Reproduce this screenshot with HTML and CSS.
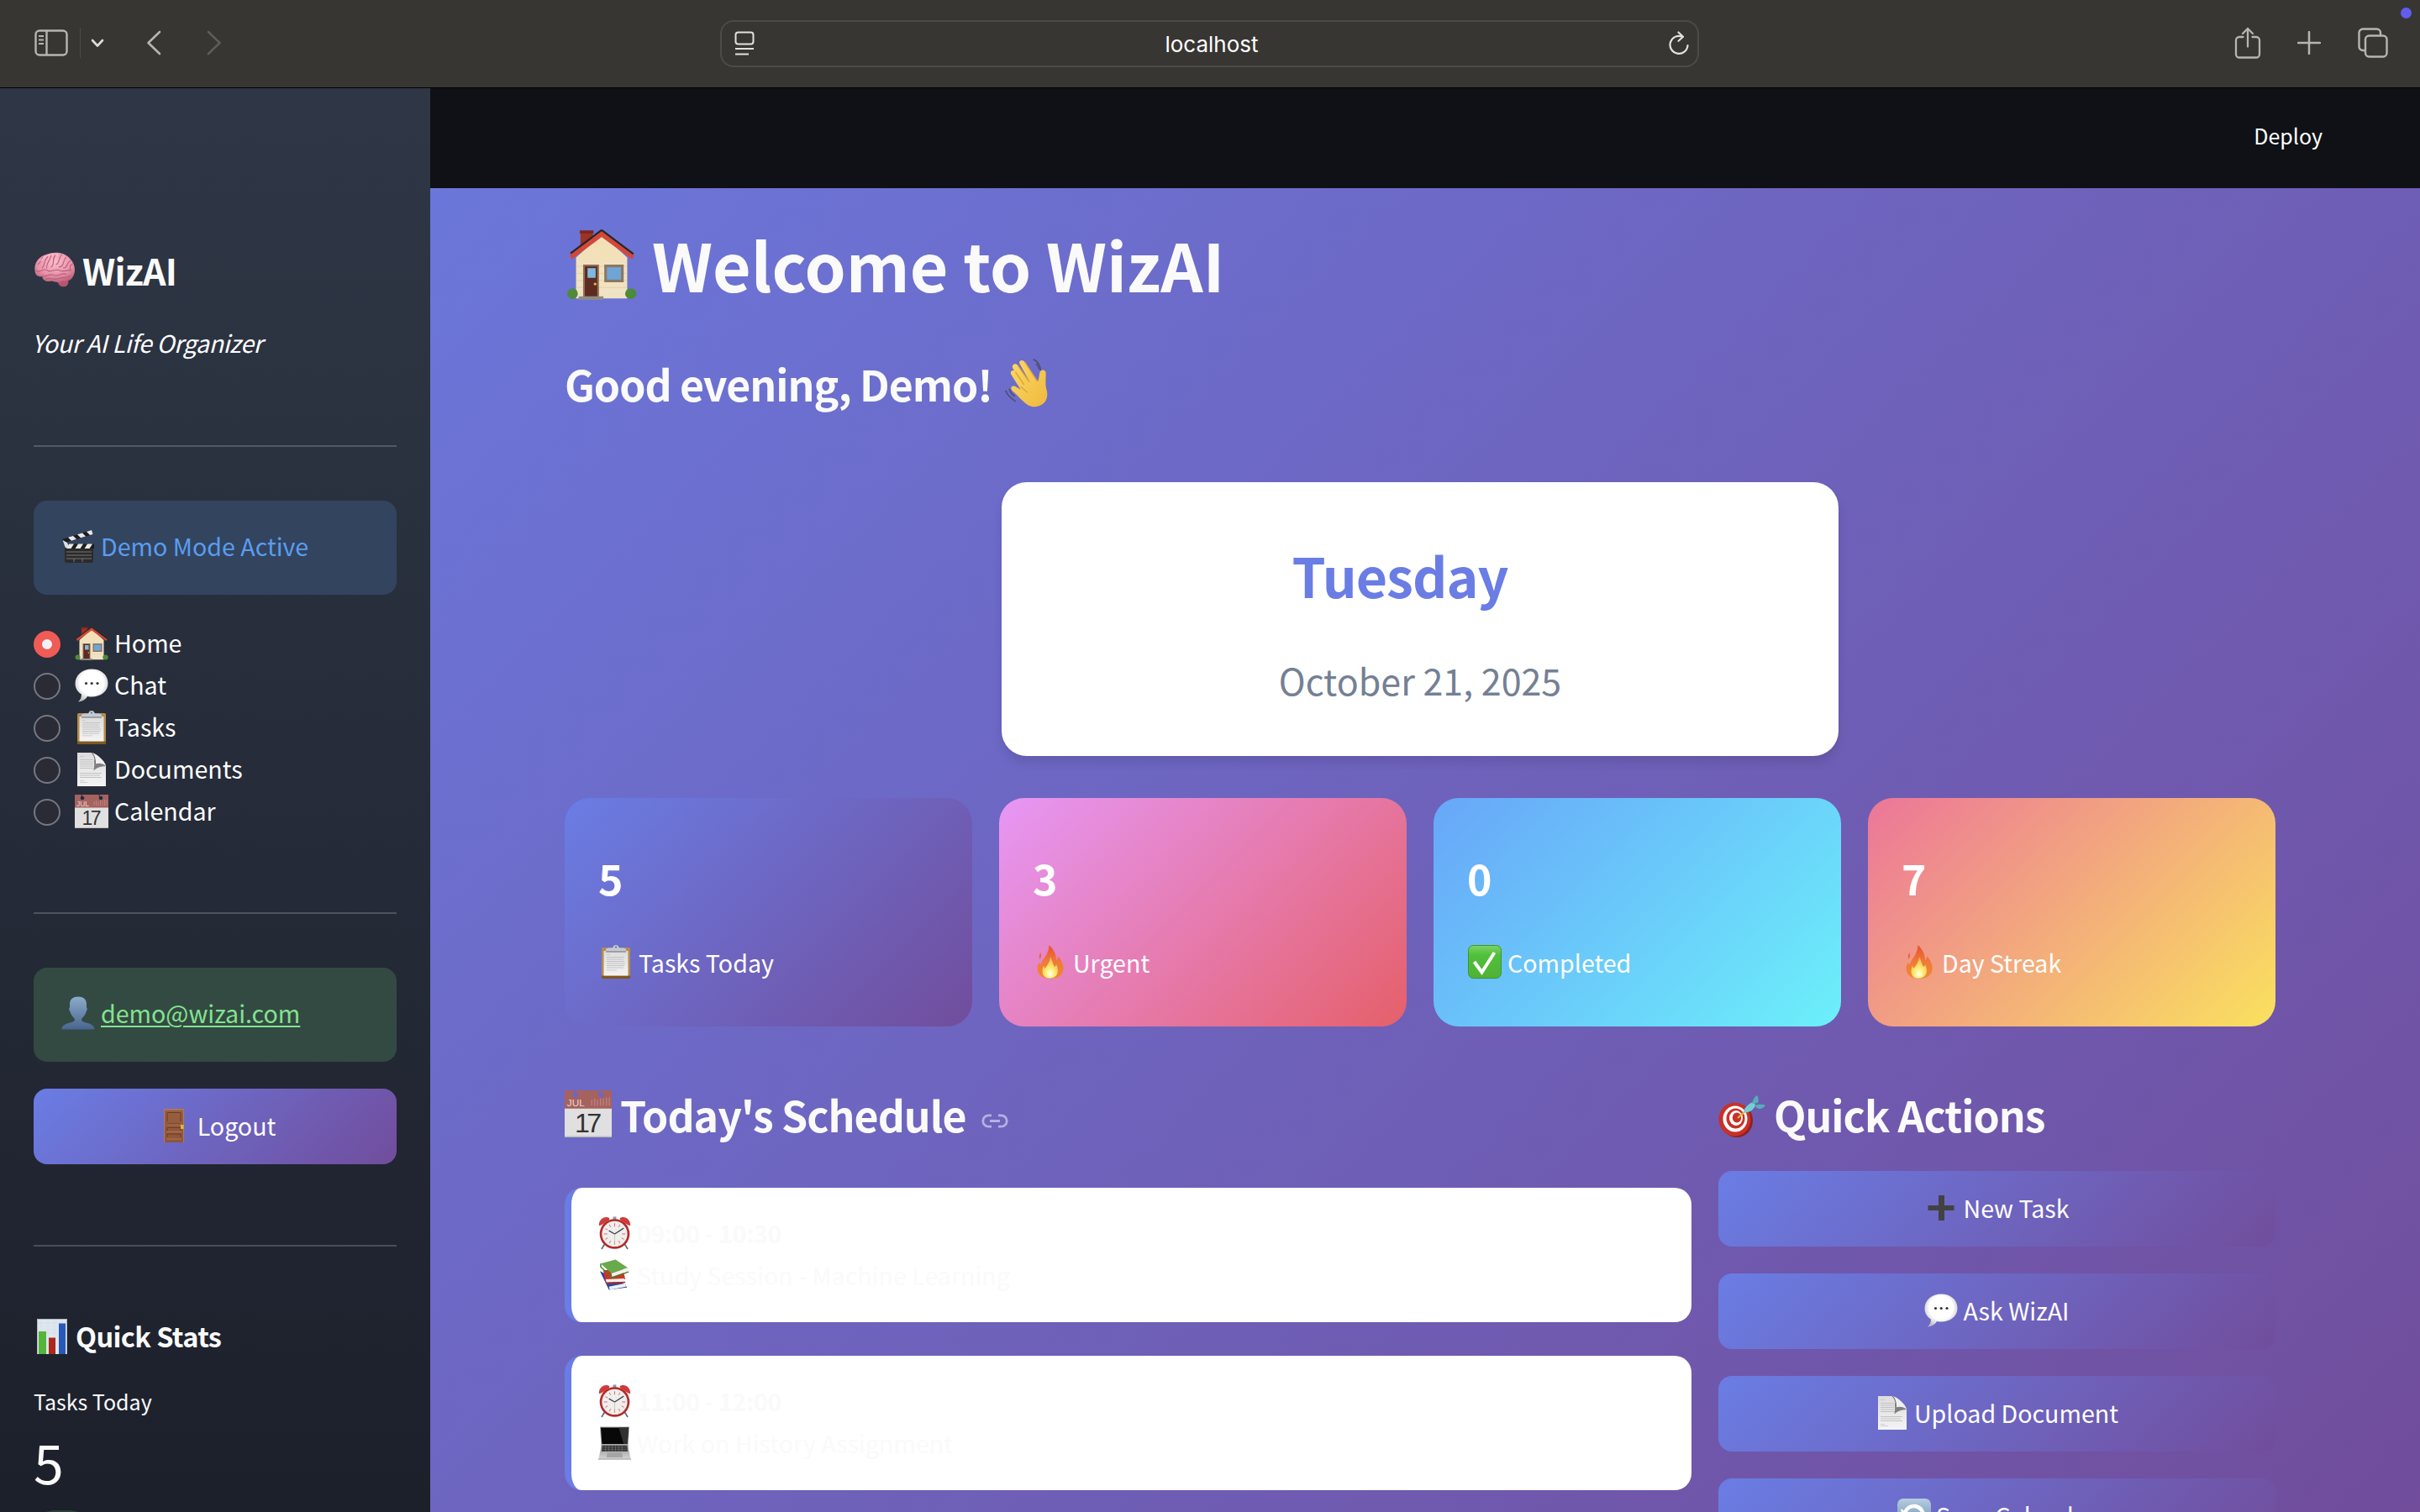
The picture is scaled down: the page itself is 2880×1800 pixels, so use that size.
FILE: index.html
```html
<!DOCTYPE html>
<html lang="en">
<head>
<meta charset="utf-8">
<title>WizAI</title>
<link rel="stylesheet" href="styles.css">
</head>
<body>
<svg class="sprite" aria-hidden="true">
  <defs>
    <linearGradient id="g-wall" x1="0" y1="0" x2="0" y2="1"><stop offset="0" stop-color="#f3dfb4"/><stop offset="1" stop-color="#f0e3c6"/></linearGradient>
    <radialGradient id="g-brain" cx=".5" cy=".3" r=".75"><stop offset="0" stop-color="#fbbccb"/><stop offset=".6" stop-color="#e893aa"/><stop offset="1" stop-color="#b85a72"/></radialGradient>
    <radialGradient id="g-bubble" cx=".5" cy=".42" r=".6"><stop offset=".6" stop-color="#fff"/><stop offset="1" stop-color="#bdbdbd"/></radialGradient>
    <linearGradient id="g-paper" x1="0" y1="0" x2="0" y2="1"><stop offset="0" stop-color="#dcdcdc"/><stop offset="1" stop-color="#f4f4f4"/></linearGradient>
    <linearGradient id="g-user" x1="0" y1="0" x2="0" y2="1"><stop offset="0" stop-color="#8daccb"/><stop offset="1" stop-color="#48658f"/></linearGradient>
    <linearGradient id="g-check" x1="0" y1="0" x2="0" y2="1"><stop offset="0" stop-color="#7fd364"/><stop offset=".3" stop-color="#4fc03b"/><stop offset="1" stop-color="#50b136"/></linearGradient>
    <linearGradient id="g-fire" x1="0" y1="0" x2="0" y2="1"><stop offset="0" stop-color="#e8502e"/><stop offset=".5" stop-color="#ef7a3b"/><stop offset="1" stop-color="#f08a2c"/></linearGradient>
    <radialGradient id="g-flame" cx=".5" cy=".8" r=".7"><stop offset="0" stop-color="#fff"/><stop offset=".35" stop-color="#fdf27a"/><stop offset="1" stop-color="#f8b950"/></radialGradient>
    <linearGradient id="g-hand" x1="0" y1="0" x2="1" y2="1"><stop offset="0" stop-color="#fbd867"/><stop offset="1" stop-color="#efb93c"/></linearGradient>
    <linearGradient id="g-sync" x1="0" y1="0" x2="0" y2="1"><stop offset="0" stop-color="#b5cde0"/><stop offset="1" stop-color="#5d84a8"/></linearGradient>
    <linearGradient id="g-door" x1="0" y1="0" x2="0" y2="1"><stop offset="0" stop-color="#99603f"/><stop offset="1" stop-color="#8d5639"/></linearGradient>
    <linearGradient id="g-base" x1="0" y1="0" x2="0" y2="1"><stop offset="0" stop-color="#8e8e8e"/><stop offset="1" stop-color="#d4d4d4"/></linearGradient>
  </defs>

  <symbol id="house" viewBox="0 0 40 40">
    <path d="M8 1h7v10H8z" fill="#9c3325"/><path d="M7.6.6h7.8v1.8H7.6z" fill="#7e281e"/>
    <path d="M5.5 16 20 3l14.500 13v23.200h-29z" fill="url(#g-wall)"/>
    <path d="M5.500 21H34M5.500 25H34M5.500 29H34M5.500 33H34" stroke="#e2cf9f" stroke-width=".4"/>
    <path d="M20 1 1.800 14.600 3 17 20 4.400 37.400 17l1-2.200z" fill="#d2483a"/>
    <path d="M20 .4 2.400 13.600M20 .4 38 14" stroke="#2c2523" stroke-width="1.100" fill="none"/>
    <path d="M9.500 20h9v18.500h-9z" fill="#8d7057"/><path d="M10.500 21h7v17h-7z" fill="#5d2b20"/><path d="M12 22h4.600v5.500H12z" fill="#7fb9df"/><circle cx="16.300" cy="31" r=".8" fill="#e5be52"/>
    <path d="M21.500 20h11v10h-11z" fill="#8b7762"/><path d="M23 21.500h8v7h-8z" fill="#6fa5d6"/>
    <path d="M7 38h14v2H7z" fill="#8d8a86"/><ellipse cx="3.500" cy="36.500" rx="3" ry="3" fill="#4e8a38"/><ellipse cx="36.500" cy="36.500" rx="3.200" ry="3" fill="#4e8a38"/>
  </symbol>
  <symbol id="brain" viewBox="0 0 48 40">
    <path d="M28 33c-1 3 2 7 7 6.500 4-.5 6-5 4-9z" fill="#b6566c"/>
    <path d="M2 24C-1 13 6 5 15 2.500 24-1 36 0 42 8c5 5 6.500 13 3.500 19-2 5-7 7-12 6-4 3-9 1-13 0C13 35 10 31 10 28c-4 0-7-1-8-4z" fill="url(#g-brain)"/>
    <g fill="none" stroke="#b9607a" stroke-width="1.100" stroke-linecap="round"><path d="M5 14c4-3 4-6 5-8M10 18c3-3 1-7 6-13M15 18c-1-6 4-7 5-15M20 17c5-3 0-8 5-14M26 14c4-2 2-7 6-11M29 17c6 0 4-7 8-11M34 18c5 1 3-6 8-8M3 21c6 4 7-4 13 0 5 3 8-3 14 0 5 2 7-1 13 0M10 27c5 2 7-3 12-1 6 3 9-3 15-1M14 31c6-3 9 2 15-1 5-2 8 1 13-3M45 13c-3 1-4 3-3 7"/></g>
    <path d="M8 10c5-6 13-8 20-7" fill="none" stroke="#ffdfe6" stroke-width="1" opacity=".7"/>
  </symbol>
  <symbol id="clapper" viewBox="0 0 40 40">
    <path d="M4 22h34v15a3 3 0 0 1-3 3H7a3 3 0 0 1-3-3z" fill="#2b2b2b"/>
    <path d="M4 17.500h35V23H4z" fill="#1d1d1d"/><path d="m9 17.500 6 0-3.500 5.500H6zm11 0h6L22.500 23h-6zm11 0h6L33.500 23h-6z" fill="#e9e9e9"/>
    <path d="M1 12 36 1l1.500 5L3 16.500z" fill="#1d1d1d"/><path d="m8 9.800 6-1.900 4 3.900-6 1.900zm11-3.500 6-1.800 4 3.900-6 1.800zM30 2.900 36 1l1.500 5-3.500 1z" fill="#e9e9e9"/>
    <path d="M1.500 13 7 16l2 5-4 1.500z" fill="#d7e2e2"/><path d="M6 27h30M6 31h30M6 35h30" stroke="#777" stroke-width="1"/><path d="M15 35v4M25 35v4" stroke="#888" stroke-width=".8"/>
  </symbol>
  <symbol id="bubble" viewBox="0 0 40 40">
    <path d="M20 .5C9.500.5.5 7.500.5 17.500c0 6 3 10.500 7.500 13 0 4-1.500 7-4 9 5-.5 9-3 11-6.500 13 2.500 24.500-4.500 24.500-15.500S30.500.5 20 .5z" fill="url(#g-bubble)"/>
    <circle cx="13.500" cy="17.500" r="1.600" fill="#333"/><circle cx="20.200" cy="17.500" r="1.600" fill="#333"/><circle cx="27" cy="17.500" r="1.600" fill="#333"/>
  </symbol>
  <symbol id="clipboard" viewBox="0 0 40 40">
    <rect x="3" y="3" width="34" height="37" rx="1.500" fill="#b58c4b"/><path d="M3 36.500h34V39a1 1 0 0 1-1 1H4a1 1 0 0 1-1-1z" fill="#80581f"/>
    <path d="M5.500 7h29v29.500h-29z" fill="url(#g-paper)"/><path d="M9 14h21v1H9zm0 2.500h20v1H9zM9 19h21v1H9zm0 2.500h22v1H9zM9 24h21v1H9zm0 2.500h20v1H9zm0 3h12v.8H9zM9 11h4v.8H9z" fill="#c2c2c2"/>
    <path d="M8 8V5.500c0-1 1-1.500 3-2h5C17 1 18 0 20 0s3 1 4 3.500h5c2 .5 3 1 3 2V8z" fill="#c0cbd6"/><path d="M8 7.500h24v1H8z" fill="#6d6d6d"/><circle cx="20" cy="2.500" r="1" fill="#5c6670"/>
  </symbol>
  <symbol id="page" viewBox="0 0 40 40">
    <path d="M3 0h17c4 0 17 11 17 16v24H3z" fill="url(#g-paper)"/>
    <path d="M6 8h16v1H6zm0 2.500h16v1H6zM6 13h16v1H6zm0 2.500h16v1H6zM6 18h17v1H6zm0 6h26v1H6zm0 2.500h24v1H6zM6 29h26v1H6zM6 4h5v.8H6zm0 29h5v.8H6zm0 2h9v.8H6z" fill="#c3c3c3"/>
    <path d="M22.500 21.500c.8-5 .8-9 .5-13 5-.5 11 2 14 7.500-5 .5-9 .5-14.500 5.500z" fill="#6d6d6d" opacity=".85"/><path d="M20 0c4 3 4.500 8 4.500 13.500C29 12 34 13 37 16 35 9 27 2 20 0z" fill="#f0f0f0"/><path d="M20 0c4 3 4.500 8 4.500 13.500" fill="none" stroke="#777" stroke-width="1.200"/>
  </symbol>
  <symbol id="calendar" viewBox="0 0 40 40">
    <path d="M0 0h40v40H0z" fill="#e0e0e0"/><path d="M0 0h40v15.500H0z" fill="#a5625f"/>
    <circle cx="9" cy="4" r="2.300" fill="currentColor"/><circle cx="31" cy="4" r="2.300" fill="currentColor"/><path d="M8 0 9 4M28.500 0l2.500 4" stroke="currentColor"/>
    <path d="M23 8v5m2.500-6v6M28 8v5m2.500-6v6M33 7v6m2.500-7v7M38 6v7" stroke="#bb807d" stroke-width="1"/>
    <path d="M0 39h40v1H0z" fill="#bcbcbc"/>
  </symbol>
  <symbol id="user" viewBox="0 0 40 40"><path d="M20 .5c-6 0-10 3-10 9v4c-1 0-1 3 .5 5C12 24 16 26 16 28c0 5-15 2-15.500 11.500h39C39 30 24 33 24 28c0-2 4-4 5.500-9.500 1.500-2 1.500-5 .5-5v-4c0-6-4-9-10-9z" fill="url(#g-user)"/></symbol>
  <symbol id="door" viewBox="0 0 24 40"><path d="M0 0h24v40H0z" fill="#b07a61"/><path d="M1 1.500h22V40H1z" fill="url(#g-door)"/><g fill="none" stroke="#693b26"><path d="M4 15V4.500h16V15M4 20v-2h16M4 26.500V22.500h16V26M4 34v-4h16v4"/></g><path d="M3 19h18M3 27.500h18M3 36h18" stroke="#b57555"/><path d="M20 19h3.500v5H20z" fill="#e1ba3a"/></symbol>
  <symbol id="chart" viewBox="0 0 36 42"><path d="M0 0h36v42H0z" fill="#b1b8bf"/><path d="M1 1h34v41H1z" fill="#dfe7ee"/><path d="M1 5h34M1 9h34M1 13h34M1 17h34M5 1v40M13 1v40M21 1v40M29 1v40" stroke="#cbd9e4" stroke-width=".5"/><path d="M2 15h9v27H2z" fill="#55b53b"/><path d="M14 22.500h8V42h-8z" fill="#ac271c"/><path d="M26 5.500h8V42h-8z" fill="#2859b8"/></symbol>
  <symbol id="wave" viewBox="0 0 56 56">
    <path d="M7 18c-2-4 3-6 5-3L22 30 9 11c-2-4 3-7 6-3l13 18L17 6c-2-4 3-6 6-2l15 22c1-3 1-5 2-10 .5-4 7-4 7 .5 0 8-1 13 1 20 4 16-12 22-21 17-6-3-11-10-18-16-4-4-1-8 4-5l5 3L7 18z" fill="url(#g-hand)"/>
    <path d="m12 15 10 15M15 8l13 19M23 4l14 22M18 32l8 7" stroke="#dd9e32" stroke-width="1.200" fill="none"/><path d="M33 1c5 2 7 6 8 12M36 6c2 2 3 4 3 6M1 37c2 6 6 9 11 12M5 35c1 4 3 6 6 8" stroke="#4f4c68" stroke-width="1.400" fill="none" stroke-linecap="round"/>
  </symbol>
  <symbol id="fire" viewBox="0 0 40 40"><path d="M18.500 0c5 5 8.500 10 8.500 18 1.500-1 2-2.500 2.200-4.500 5 5 6.800 11 6.300 16C34.500 37 28 40 20 40S4.500 36.500 4.500 28c0-3 1-5 2-7 1 1 1.300 2 1.500 3 3-8 10-12 10.500-24z" fill="url(#g-fire)"/><path d="M8.500 9c-2 3-2 5-1 8 1.500-2 2-5 1-8z" fill="#e9613a"/><path d="M20 14c3 6 3 9 5 12 1.500-1 2-2 2-3 4 8 2 16-7 16.500C10 40 9 31 12 25c1 1 1 2 1.500 3 3-4 6-8 6.500-14z" fill="url(#g-flame)"/></symbol>
  <symbol id="check" viewBox="0 0 40 40"><rect x=".5" y=".5" width="39" height="39" rx="6" fill="url(#g-check)" stroke="#3e952c"/><path d="m7.500 20 9 12.500L31.500 9" fill="none" stroke="#fff" stroke-width="4"/></symbol>
  <symbol id="target" viewBox="0 0 56 50"><ellipse cx="22" cy="30" rx="19" ry="20" fill="#8f201b"/><ellipse cx="19.500" cy="28.500" rx="19" ry="20" fill="#c73127"/><ellipse cx="20" cy="28" rx="14.500" ry="15.500" fill="#fff"/><ellipse cx="20.500" cy="27.500" rx="11" ry="12" fill="#c73127"/><ellipse cx="21" cy="27" rx="8" ry="9" fill="#fff"/><ellipse cx="22" cy="26.500" rx="5.200" ry="6" fill="#c73127"/><path d="m23 27 10-9" stroke="#e3b83f" stroke-width="2"/><path d="M30 20c0-5 7-11 12-12l2 3c0 5-8 11-14 9z" fill="#74cfd4"/><path d="M40 10c1-5 4-9 6-10 2 3 2 6 1 9zM43 12c5-1 9-2 13 0-3 4-7 5-10 3z" fill="#58aeb6"/></symbol>
  <symbol id="clock" viewBox="0 0 40 40"><path d="m8 33-4 6.500M32 33l4 6.500" stroke="#66717c" stroke-width="1.800"/><path d="M1 11C0 5 6-1 12 1c2 0 2 2 1 3L4 10zM39 11C40 5 34-1 28 1c-2 0-2 2-1 3l9 6z" fill="#cf3b3c"/><path d="M18 0h4v4h-4z" fill="#8b97a3"/><circle cx="20" cy="21" r="18.300" fill="#b42b2b"/><circle cx="20" cy="21" r="15.500" fill="#eee"/><path d="M20 8v4M20 30v4M7 21h4M29 21h4M13.500 9.700l1.600 2.800M26.500 9.700l-1.600 2.800M8.700 14.500l2.800 1.600M8.700 27.500l2.800-1.600M31.300 27.500l-2.800-1.600M13.500 32.300l1.600-2.800M26.500 32.300l-1.600-2.800" stroke="#e0605c"/><path d="m13 17 7 4 11-7" fill="none" stroke="#3d4643" stroke-width="1.300"/><path d="M20 21v12" stroke="#d7b291" stroke-width=".7"/></symbol>
  <symbol id="books" viewBox="0 0 40 40"><path d="m2 15 11 23 22-3-2-4z" fill="#2b46a1"/><path d="m13 34 20-4 1 4-20 4z" fill="#eef1f6"/><path d="M6 14 30 12l3 13-24 3z" fill="#cf3426"/><path d="m9 25 23-1v4l-22 1z" fill="#f4f0ee"/><path d="m9 29 24-1v1.500L10 31z" fill="#b32b20"/><path d="M3 6 21 1l15 10-20 7z" fill="#67ab4c"/><path d="m16 18 20-7 1 4-20 7z" fill="#f1f1ed"/><path d="M3 6v4l14 13 20-7" fill="none" stroke="#41832c" stroke-width="1.500"/></symbol>
  <symbol id="laptop" viewBox="0 0 40 40"><path d="M2 0h36l-2 29H4z" fill="#a5a5a5"/><path d="M3 1h34l-1.500 20h-31z" fill="#080808"/><path d="m25 1 12 0-1.300 20H31z" fill="#303030"/><path d="M4 22h32l3.500 17h-39z" fill="url(#g-base)"/><path d="M5 23h30l1 7H4z" fill="#303030"/><path d="M5 25h30M4.500 27.500h31M9 23v7M13 23v7M17 23v7M21 23v7M25 23v7M29 23v7" stroke="#8b8b8b" stroke-width=".5"/><path d="M11 31.500h18l1 6H10z" fill="#a5a5a5"/><path d="M0 39h40v1H0z" fill="#8a8a8a"/></symbol>
  <symbol id="plus" viewBox="0 0 40 40"><path d="M17 5h7v12h11.500v6H24v12h-7V23H4.500v-6H17z" fill="#424242"/></symbol>
  <symbol id="sync" viewBox="0 0 40 40"><rect width="40" height="40" rx="7" fill="url(#g-sync)"/><path d="M10 25A11 11 0 1 1 26 29" fill="none" stroke="#fff" stroke-width="4.500"/><path d="M4 12l2 12 10-5z" fill="#fff"/></symbol>
</svg>

<header class="browser">
  <div class="browser-left">
    <svg class="bi-sidebar" viewBox="0 0 40 32"><g fill="none" stroke="#b6b5b3" stroke-width="2.400"><rect x="1.500" y="1.500" width="37" height="29" rx="4.500"/><path d="M14.500 1.500v29"/></g><path d="M5 8h6M5 12.500h6M5 17h6" stroke="#b6b5b3" stroke-width="2"/></svg>
    <span class="browser-sep"></span>
    <svg class="bi-chevron" viewBox="0 0 16 11"><path d="m2 2 6 6.500L14 2" fill="none" stroke="#dedddc" stroke-width="2.600" stroke-linecap="round" stroke-linejoin="round"/></svg>
    <svg class="bi-back" viewBox="0 0 18 30"><path d="M16 2 2.500 15 16 28" fill="none" stroke="#b6b5b3" stroke-width="2.600" stroke-linecap="round" stroke-linejoin="round"/></svg>
    <svg class="bi-forward" viewBox="0 0 18 30"><path d="m2 2 13.500 13L2 28" fill="none" stroke="#5f5d5a" stroke-width="2.600" stroke-linecap="round" stroke-linejoin="round"/></svg>
  </div>
  <div class="address">
    <svg class="bi-reader" viewBox="0 0 24 30"><g fill="none" stroke="#e2e1e0" stroke-width="2"><rect x="1.500" y="1.500" width="21" height="14" rx="3"/><path d="M1 21h22M1 27.500h16"/></g></svg>
    <span class="address-text">localhost</span>
    <svg class="bi-reload" viewBox="0 0 24 30"><g fill="none" stroke="#e2e1e0" stroke-width="2.200" stroke-linecap="round" stroke-linejoin="round"><path d="M16 6.600A10.500 10.500 0 1 0 22.500 17M11.500 1.500 17 6.700l-5.500 5"/></g></svg>
  </div>
  <div class="browser-right">
    <svg class="bi-share" viewBox="0 0 32 38"><g fill="none" stroke="#b6b5b3" stroke-width="2.300" stroke-linecap="round" stroke-linejoin="round"><path d="M10.500 12H6a4 4 0 0 0-4 4v16.500a4 4 0 0 0 4 4h20a4 4 0 0 0 4-4V16a4 4 0 0 0-4-4h-4.500M16 23.500V2M10 8l6-6 6 6"/></g></svg>
    <svg class="bi-plus" viewBox="0 0 28 28"><path d="M14 1v26M1 14h26" stroke="#b6b5b3" stroke-width="2.500" stroke-linecap="round"/></svg>
    <svg class="bi-tabs" viewBox="0 0 36 36"><g fill="none" stroke="#b6b5b3" stroke-width="2.400"><rect x="9" y="9.500" width="25.500" height="25" rx="4.500"/><path d="M9 27H6a4.500 4.500 0 0 1-4.500-4.500V6A4.500 4.500 0 0 1 6 1.500h16.500A4.500 4.500 0 0 1 27 6v3.500"/></g></svg>
  </div>
  <span class="status-dot"></span>
</header>

<div class="app">
  <aside class="sidebar">
    <div class="line brand"><svg class="e-brain"><use href="#brain"/></svg><span>WizAI</span></div>
    <div class="line tagline"><span>Your AI Life Organizer</span></div>
    <div class="rule rule-first"></div>
    <div class="notice notice-info"><svg class="emoji"><use href="#clapper"/></svg><span>Demo Mode Active</span></div>
    <nav class="nav">
      <div class="line nav-item"><i class="radio radio-on"></i><svg class="emoji"><use href="#house"/></svg><span>Home</span></div>
      <div class="line nav-item"><i class="radio"></i><svg class="emoji"><use href="#bubble"/></svg><span>Chat</span></div>
      <div class="line nav-item"><i class="radio"></i><svg class="emoji"><use href="#clipboard"/></svg><span>Tasks</span></div>
      <div class="line nav-item"><i class="radio"></i><svg class="emoji"><use href="#page"/></svg><span>Documents</span></div>
      <div class="line nav-item"><i class="radio"></i><svg class="emoji calendar calendar-dark" viewBox="0 0 40 40"><use href="#calendar"/><text class="cal-month" x="2" y="13.800" textLength="15">JUL</text><text class="cal-day" x="8.500" y="35.500" textLength="23">17</text></svg><span>Calendar</span></div>
    </nav>
    <div class="rule rule-nav"></div>
    <div class="notice notice-ok"><svg class="emoji"><use href="#user"/></svg><span class="email">demo@wizai.com</span></div>
    <div class="button logout"><svg class="e-door"><use href="#door"/></svg><span>Logout</span></div>
    <div class="rule rule-stats"></div>
    <div class="line stats-title"><svg class="e-chart"><use href="#chart"/></svg><span>Quick Stats</span></div>
    <div class="line metric-label"><span>Tasks Today</span></div>
    <div class="line metric-value"><span>5</span></div>
    <div class="metric-delta"></div>
  </aside>

  <main class="main">
    <div class="topbar"><span>Deploy</span></div>
    <div class="content">
      <h1 class="line title"><svg class="e-title"><use href="#house"/></svg><span>Welcome to WizAI</span></h1>
      <h2 class="line heading greeting"><span>Good evening, Demo!</span><svg class="e-wave"><use href="#wave"/></svg></h2>
      <section class="date-card">
        <div class="line day"><span>Tuesday</span></div>
        <div class="line date"><span>October 21, 2025</span></div>
      </section>
      <section class="stats">
        <div class="stat stat-tasks"><div class="line heading"><span>5</span></div><div class="line stat-label"><svg class="emoji"><use href="#clipboard"/></svg><span>Tasks Today</span></div></div>
        <div class="stat stat-urgent"><div class="line heading"><span>3</span></div><div class="line stat-label"><svg class="emoji"><use href="#fire"/></svg><span>Urgent</span></div></div>
        <div class="stat stat-done"><div class="line heading"><span>0</span></div><div class="line stat-label"><svg class="emoji"><use href="#check"/></svg><span>Completed</span></div></div>
        <div class="stat stat-streak"><div class="line heading"><span>7</span></div><div class="line stat-label"><svg class="emoji"><use href="#fire"/></svg><span>Day Streak</span></div></div>
      </section>
      <section class="columns">
        <div class="schedule">
          <h2 class="line heading section-title"><svg class="e-section calendar" viewBox="0 0 40 40"><use href="#calendar"/><text class="cal-month" x="2" y="13.800" textLength="15">JUL</text><text class="cal-day" x="8.500" y="35.500" textLength="23">17</text></svg><span>Today's Schedule</span><svg class="link" viewBox="0 0 32 17"><path d="M12 1.800H8.500a6.700 6.700 0 0 0 0 13.400H12M20 1.800h3.500a6.700 6.700 0 0 1 0 13.400H20M10 8.500h12" fill="none" stroke="#b6b0de" stroke-width="2.800"/></svg></h2>
          <article class="event"><div class="line event-time"><svg class="emoji"><use href="#clock"/></svg><span>09:00 - 10:30</span></div><div class="line"><svg class="emoji"><use href="#books"/></svg><span>Study Session - Machine Learning</span></div></article>
          <article class="event"><div class="line event-time"><svg class="emoji"><use href="#clock"/></svg><span>11:00 - 12:00</span></div><div class="line"><svg class="emoji"><use href="#laptop"/></svg><span>Work on History Assignment</span></div></article>
        </div>
        <div class="actions">
          <h2 class="line heading section-title"><svg class="e-target"><use href="#target"/></svg><span>Quick Actions</span></h2>
          <div class="button"><svg class="emoji"><use href="#plus"/></svg><span>New Task</span></div>
          <div class="button"><svg class="emoji"><use href="#bubble"/></svg><span>Ask WizAI</span></div>
          <div class="button"><svg class="emoji"><use href="#page"/></svg><span>Upload Document</span></div>
          <div class="button"><svg class="emoji"><use href="#sync"/></svg><span>Sync Calendar</span></div>
        </div>
      </section>
    </div>
  </main>
</div>
</body>
</html>
```
FILE: styles.css
```css
* { box-sizing: border-box; }

body {
  margin: 0;
  width: 2880px;
  height: 1800px;
  overflow: hidden;
  display: flex;
  flex-direction: column;
  font-family: "Noto Sans CJK SC", "Open Sans", sans-serif;
  font-size: 28.6px;
  color: #fafafa;
}

h1, h2 { margin: 0; }
svg { display: block; flex: none; }
.sprite { position: absolute; width: 0; height: 0; }

/* Browser chrome */
.browser {
  position: relative;
  flex: none;
  display: grid;
  grid-template-columns: 857px 1165px 1fr;
  align-items: center;
  height: 105px;
  background: #383633;
  border-bottom: 1px solid #000;
}
.browser-left { display: flex; align-items: center; padding: 0 0 2px 41px; }
.bi-sidebar { width: 40px; height: 32px; }
.browser-sep { width: 1px; height: 36px; margin-left: 14px; background: #4d4b48; }
.bi-chevron { width: 16px; height: 11px; margin-left: 12px; }
.bi-back { width: 18px; height: 30px; margin-left: 50px; }
.bi-forward { width: 18px; height: 30px; margin-left: 54px; }
.address {
  display: flex;
  align-items: center;
  justify-content: space-between;
  height: 56px;
  padding: 0 10px 0 15px;
  border: 2px solid #4d4b49;
  border-radius: 16px;
}
.bi-reader, .bi-reload { width: 24px; height: 30px; }
.address-text { font-family: Inter, "Liberation Sans", sans-serif; font-size: 26px; color: #fff; }
.browser-right { display: flex; align-items: center; padding: 0 0 3px 637px; }
.bi-share { width: 32px; height: 38px; }
.bi-plus { width: 28px; height: 28px; margin-left: 43px; }
.bi-tabs { width: 36px; height: 36px; margin-left: 44px; }
.status-dot {
  position: absolute;
  top: 9px;
  right: 10px;
  width: 13px;
  height: 13px;
  border-radius: 50%;
  background: #625df0;
}

/* Shared pieces */
.app {
  flex: 1;
  min-height: 0;
  display: flex;
  background: linear-gradient(135deg, #6a7de4 0%, #714d9c 100%);
}
.line { display: flex; align-items: center; height: 50px; white-space: nowrap; }
.emoji { width: 40px; height: 40px; margin-right: 8px; }
.heading { height: 70px; font-size: 50px; font-weight: 600; letter-spacing: -1px; }
.calendar { color: #6c66c4; font-family: "Liberation Sans", sans-serif; font-weight: 400; letter-spacing: 0; }
.calendar-dark { color: #252b3a; }
.cal-month { font-size: 8.4px; fill: #ecd6d4; }
.cal-day { font-size: 23px; fill: #333; }
.button {
  display: flex;
  align-items: center;
  justify-content: center;
  height: 90px;
  padding-bottom: 3px;
  border-radius: 16px;
  background: linear-gradient(135deg, #6a7de4 0%, #714d9c 100%);
  color: #fff;
  white-space: nowrap;
}
.button .emoji { margin-right: 6px; }

/* Sidebar */
.sidebar {
  flex: none;
  width: 512px;
  padding: 187px 40px 0;
  overflow: hidden;
  background: linear-gradient(180deg, #2f3746 0%, #1c202b 100%);
}
.brand { height: 58px; font-size: 43px; font-weight: 700; letter-spacing: -.8px; }
.e-brain { width: 50px; height: 42px; margin-right: 8px; }
.tagline { margin: 32px 0 0 -2px; font-style: italic; letter-spacing: -.36px; color: #fff; }
.rule { height: 2px; background: rgba(250, 250, 250, .2); }
.rule-first { margin-top: 98px; }
.rule-nav { margin-top: 95px; }
.rule-stats { margin-top: 96px; }
.notice {
  display: flex;
  align-items: center;
  height: 112px;
  margin-top: 64px;
  padding: 0 33px 5px;
  border-radius: 16px;
  white-space: nowrap;
}
.notice-info { background: #33445f; color: #5a9df0; }
.notice-ok { background: #334a42; color: #84e290; }
.notice .emoji { margin-right: 7px; }
.email { text-decoration: underline; text-decoration-thickness: 2px; text-underline-offset: 3px; }
.nav { margin-top: 33px; }
.nav-item { color: #fff; }
.nav-item .emoji { margin-right: 7px; }
.nav-item span { padding-bottom: 3px; }
.radio {
  width: 32px;
  height: 32px;
  margin: 2px 17px 0 0;
  border: 2px solid #757881;
  border-radius: 50%;
  background: #2b2b36;
}
.radio-on { border: 10px solid #f05b55; background: #f0f2f6; }
.logout { margin-top: 32px; }
.e-door { width: 24px; height: 40px; margin: 0 16px 0 11px; }
.stats-title { margin-top: 80px; font-size: 32.5px; font-weight: 600; letter-spacing: -.6px; }
.e-chart { width: 36px; height: 42px; margin: 4px 10px 0 4px; }
.metric-label { height: 44px; margin-top: 32px; font-size: 25px; }
.metric-value { height: 90px; margin-top: 4px; font-size: 64.4px; }
.metric-delta { width: 60px; height: 40px; margin: 14px 0 0 4px; border-radius: 20px; background: #2b4038; }

/* Main column */
.main { flex: 1; min-width: 0; }
.topbar {
  display: flex;
  align-items: center;
  justify-content: flex-end;
  height: 119px;
  padding: 0 116px 7px 0;
  background: #0f1116;
  font-size: 25px;
  color: #fff;
}
.content { padding: 37px 172px 0 160px; }
.title { height: 106px; font-size: 78.7px; font-weight: 700; }
.e-title { width: 84px; height: 86px; margin: 2px 18px 0 2px; }
.greeting { margin-top: 54px; }
.e-wave { width: 58px; height: 58px; margin-left: 15px; }
.date-card {
  width: 996px;
  height: 326px;
  margin: 83px 0 0 520px;
  padding-top: 65px;
  border-radius: 30px;
  background: #fff;
  box-shadow: 0 8px 12px rgba(0, 0, 0, .1);
}
.day { justify-content: center; height: 90px; padding-right: 48px; font-size: 64.4px; font-weight: 600; letter-spacing: -1px; color: #6a7de4; }
.date { justify-content: center; height: 60px; margin-top: 50px; font-size: 43px; color: #748094; }
.stats { display: grid; grid-template-columns: repeat(4, 1fr); gap: 32px; margin-top: 50px; }
.stat { height: 272px; padding: 59px 40px 0; border-radius: 30px; color: #fff; }
.stat-label { margin-top: 41px; }
.stat-label .emoji { margin: 0 7px 0 1px; }
.stat-tasks { background: linear-gradient(135deg, #6a7de4 0%, #714d9c 100%); }
.stat-urgent { background: linear-gradient(135deg, #e697f6 0%, #e5606a 100%); }
.stat-done { background: linear-gradient(135deg, #68a6f8 0%, #6cf0fb 100%); }
.stat-streak { background: linear-gradient(135deg, #ec7699 0%, #fae15e 100%); }
.columns { display: grid; grid-template-columns: 1341px 663px; gap: 32px; margin-top: 70px; }
.section-title { height: 68px; }
.e-section { width: 56px; height: 56px; margin-right: 10px; }
.link { width: 32px; height: 17px; margin: 16px 0 0 18px; }
.e-target { width: 56px; height: 50px; margin: 6px 10px 0 0; }
.event { height: 160px; margin-top: 40px; padding: 29px 32px 0; border-left: 8px solid #6a7de4; border-radius: 20px; background: #fff; }
.section-title + .event { margin-top: 54px; }
.event .emoji { margin-right: 7px; width: 39px; }
.event .line span { padding-bottom: 2px; }
.event-time { font-weight: 600; letter-spacing: -.4px; }
.actions .button { margin-top: 32px; }
.actions .section-title + .button { margin-top: 34px; }
```
